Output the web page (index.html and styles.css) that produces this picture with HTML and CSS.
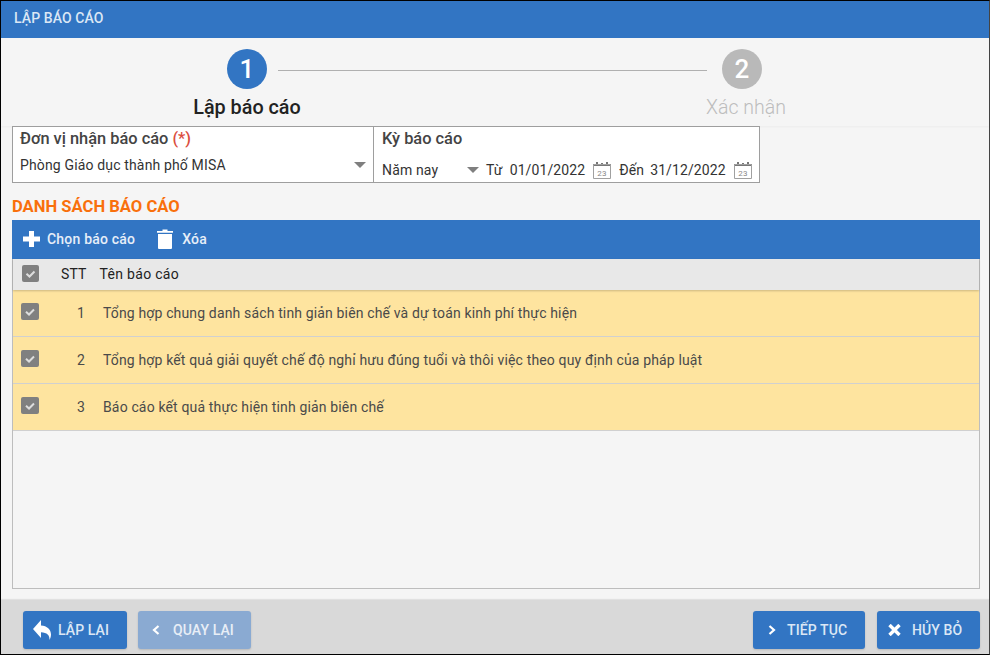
FILE: index.html
```html
<!DOCTYPE html>
<html lang="vi">
<head>
<meta charset="utf-8">
<title>Lập báo cáo</title>
<link rel="stylesheet" href="styles.css">
</head>
<body>
<div class="window">
  <header class="titlebar">LẬP BÁO CÁO</header>
  <main class="content">
    <section class="stepper">
      <div class="step">
        <div class="circle active">1</div>
        <div class="step-label active">Lập báo cáo</div>
      </div>
      <div class="step-line"></div>
      <div class="step">
        <div class="circle">2</div>
        <div class="step-label second">Xác nhận</div>
      </div>
    </section>
    <section class="form-box">
      <div class="field unit">
        <div class="field-title">Đơn vị nhận báo cáo <span class="req">(*)</span></div>
        <div class="field-row">
          <span class="grow">Phòng Giáo dục thành phố MISA</span>
          <span class="caret"></span>
        </div>
      </div>
      <div class="field period">
        <div class="field-title">Kỳ báo cáo</div>
        <div class="field-row">
          <span class="period-name">Năm nay</span>
          <span class="caret small"></span>
          <span class="lbl">Từ</span>
          <span class="date">01/01/2022</span>
          <svg class="cal" viewBox="0 0 18 17" width="18" height="17"><path fill="#777" d="M0 2h18v2H0z"/><path fill="#777" d="M3 0h2v3H3zM8 1h2v2H8zM13 0h2v3h-2z"/><path fill="none" stroke="#a0a0a0" d="M.5 2.500h17v14H.5z"/><text x="9" y="14" class="cal-num" text-anchor="middle">23</text></svg>
          <span class="lbl to">Đến</span>
          <span class="date">31/12/2022</span>
          <svg class="cal" viewBox="0 0 18 17" width="18" height="17"><path fill="#777" d="M0 2h18v2H0z"/><path fill="#777" d="M3 0h2v3H3zM8 1h2v2H8zM13 0h2v3h-2z"/><path fill="none" stroke="#a0a0a0" d="M.5 2.500h17v14H.5z"/><text x="9" y="14" class="cal-num" text-anchor="middle">23</text></svg>
        </div>
      </div>
    </section>
    <h2 class="section-title">DANH SÁCH BÁO CÁO</h2>
    <div class="toolbar">
      <span class="tool">
        <svg viewBox="0 0 17 16" width="17" height="16"><path fill="#fff" d="M6 0h5v5.500h6v5h-6V16H6v-5.500H0v-5h6z"/></svg>
        Chọn báo cáo
      </span>
      <span class="tool">
        <svg viewBox="0 0 16 20" width="16" height="20"><path fill="#fff" d="M0 2h5.500V.5h5V2H16v1.800H0zM1 5h14v14a1 1 0 0 1-1 1H2a1 1 0 0 1-1-1z"/></svg>
        Xóa
      </span>
    </div>
    <section class="grid">
      <div class="grid-head">
        <span class="check head-check"><svg viewBox="0 0 17 17" width="17" height="17"><path fill="none" stroke="#ddd" stroke-width="2" d="M4.500 8.800l3 2.700 5-5"/></svg></span>
        <span class="stt-head">STT</span>
        <span class="name-head">Tên báo cáo</span>
      </div>
      <div class="grid-row">
        <span class="check"><svg viewBox="0 0 18 17" width="18" height="17"><path fill="none" stroke="#ddd" stroke-width="2" d="M5 8.800l3 2.700 5-5"/></svg></span>
        <span class="stt">1</span>
        <span>Tổng hợp chung danh sách tinh giản biên chế và dự toán kinh phí thực hiện</span>
      </div>
      <div class="grid-row">
        <span class="check"><svg viewBox="0 0 18 17" width="18" height="17"><path fill="none" stroke="#ddd" stroke-width="2" d="M5 8.800l3 2.700 5-5"/></svg></span>
        <span class="stt">2</span>
        <span>Tổng hợp kết quả giải quyết chế độ nghỉ hưu đúng tuổi và thôi việc theo quy định của pháp luật</span>
      </div>
      <div class="grid-row">
        <span class="check"><svg viewBox="0 0 18 17" width="18" height="17"><path fill="none" stroke="#ddd" stroke-width="2" d="M5 8.800l3 2.700 5-5"/></svg></span>
        <span class="stt">3</span>
        <span>Báo cáo kết quả thực hiện tinh giản biên chế</span>
      </div>
    </section>
  </main>
  <footer class="footer">
    <button class="btn reset">
      <svg viewBox="0 0 19 20" width="19" height="20"><path fill="#fff" d="M8 0v5.500c6 .3 10 4 10 9 0 2-.6 4-1.600 5.500.6-4.500-2.400-7.500-8.400-7.700V18L0 9z"/></svg>
      LẬP LẠI
    </button>
    <button class="btn disabled back">
      <svg viewBox="0 0 8 10" width="8" height="10"><path fill="none" stroke="#fff" stroke-width="2.200" d="M6.500 1L2 5l4.500 4"/></svg>
      QUAY LẠI
    </button>
    <span class="grow"></span>
    <button class="btn next">
      <svg viewBox="0 0 8 10" width="8" height="10"><path fill="none" stroke="#fff" stroke-width="2.200" d="M1.500 1L6 5 1.500 9"/></svg>
      TIẾP TỤC
    </button>
    <button class="btn cancel">
      <svg viewBox="0 0 13 12" width="13" height="12"><path fill="none" stroke="#fff" stroke-width="3.400" d="M1.500 1l10 10M11.500 1l-10 10"/></svg>
      HỦY BỎ
    </button>
  </footer>
</div>
</body>
</html>
```
FILE: styles.css
```css
* { box-sizing: border-box; }
html, body { margin: 0; padding: 0; }
body { width: 990px; height: 655px; overflow: hidden; font-family: Roboto, "Noto Sans", sans-serif; background: #fff; }
.window { width: 990px; height: 655px; display: flex; flex-direction: column; border: 1px solid #000; border-right-color: #444; background: #f5f5f5; }
.titlebar { height: 37px; flex: none; background: #3275c3; color: #dbe7f5; font-size: 14px; letter-spacing: .1px; font-weight: 500; line-height: 34px; padding-left: 13px; }
.content { flex: 1; display: flex; flex-direction: column; padding: 0 9px 0 11px; min-height: 0; }
.stepper { height: 88px; flex: none; display: flex; align-items: flex-start; padding-top: 11px; margin: 0 -9px 0 -11px; padding-left: 191px; box-shadow: 0 1px 2px rgba(0,0,0,.04); }
.step { width: 110px; display: flex; flex-direction: column; align-items: center; }
.circle { width: 40px; height: 40px; border-radius: 50%; background: #b9b9b9; color: #fff; font-size: 26px; font-weight: 500; line-height: 40px; text-align: center; }
.circle.active { background: #3275c3; }
.step-label { font-size: 19.500px; line-height: 24px; margin-top: 7px; color: #bdbdbd; white-space: nowrap; font-weight: 300; }
.step-label.second { margin-left: 8px; }
.step-label.active { color: #222; font-weight: 500; font-size: 19.800px; }
.step-line { width: 429px; height: 1px; background: #b0b0b0; margin: 21px -20px 0 -24px; flex: none; }
.form-box { flex: none; width: 748px; height: 57px; display: flex; border: 1px solid #9e9e9e; background: #fff; color: #333; font-size: 14px; letter-spacing: .15px; }
.field { padding: 2px 7px 0; display: flex; flex-direction: column; }
.unit { width: 361px; border-right: 1px solid #9e9e9e; }
.period { flex: 1; padding: 2px 6px 0 8px; }
.field-title { font-size: 16.400px; letter-spacing: 0; font-weight: 500; color: #444; line-height: 20px; }
.req { color: #db4d3d; }
.field-row { display: flex; align-items: center; height: 26px; margin-top: 3px; white-space: nowrap; }
.period .field-row { margin-top: 9px; height: 24px; }
.grow { flex: 1; }
.caret { width: 0; height: 0; border-left: 6px solid transparent; border-right: 6px solid transparent; border-top: 6px solid #7f7f7f; }
.caret.small { margin: 0 7px 0 28px; }
.period-name { width: 57px; }
.lbl { margin-right: 7px; }
.lbl.to { margin: 0 6px 0 8px; }
.date { margin-right: 8px; font-size: 14px; letter-spacing: .1px; }
.cal { flex: none; }
.cal-num { font: 8px Roboto, sans-serif; fill: #888; }
.section-title { margin: 14px 0 4px; font-size: 16.600px; line-height: 19px; font-weight: 700; color: #f9700c; }
.toolbar { flex: none; height: 39px; display: flex; align-items: center; gap: 22px; padding: 0 0 2px 11px; background: #3275c3; color: #e6eef8; font-size: 14px; letter-spacing: .2px; font-weight: 500; }
.tool { display: flex; align-items: center; gap: 7px; }
.tool + .tool { gap: 9px; }
.grid { flex: 1; margin-bottom: 11px; border: 1px solid #bdbdbd; border-top: 0; background: #f5f5f5; font-size: 14px; letter-spacing: .15px; color: #4a4a4a; }
.grid-head { height: 31px; display: flex; align-items: center; padding-bottom: 2px; background: #e8e8e8; color: #222; box-shadow: 0 1px 2px rgba(0,0,0,.2); position: relative; }
.name-head { letter-spacing: .3px; }
.grid-row { height: 47px; display: flex; align-items: center; background: #fee49f; border-bottom: 1px solid #d0d0d0; padding-bottom: 1px; }
.check { width: 18px; height: 17px; border-radius: 2px; background: #808080; margin: 0 0 2px 8px; display: block; flex: none; }
.check svg { display: block; }
.head-check { width: 17px; margin: 0 0 0 9px; }
.stt-head { margin: 0 13px 0 22px; }
.stt { width: 46px; text-align: right; margin-right: 18px; flex: none; }
.footer { flex: none; height: 54px; display: flex; padding: 11px 9px 0 22px; background: #d9d9d9; box-shadow: 0 -1px 1px rgba(0,0,0,.08); }
.btn { height: 38px; border: 0; border-radius: 3px; background: #3275c3; color: #dbe7f5; font-family: inherit; font-size: 14px; letter-spacing: .1px; font-weight: 500; display: flex; align-items: center; padding: 0; box-shadow: 0 1px 2px rgba(0,0,0,.15); }
.btn.disabled { background: #8aaad2; color: #e8eef6; }
.reset { width: 104px; padding-left: 10px; gap: 6px; }
.back { width: 113px; margin-left: 11px; padding-left: 14px; gap: 13px; }
.next { width: 112px; margin-right: 12px; padding-left: 15px; gap: 11px; }
.cancel { width: 103px; padding-left: 11px; gap: 11px; }
```
